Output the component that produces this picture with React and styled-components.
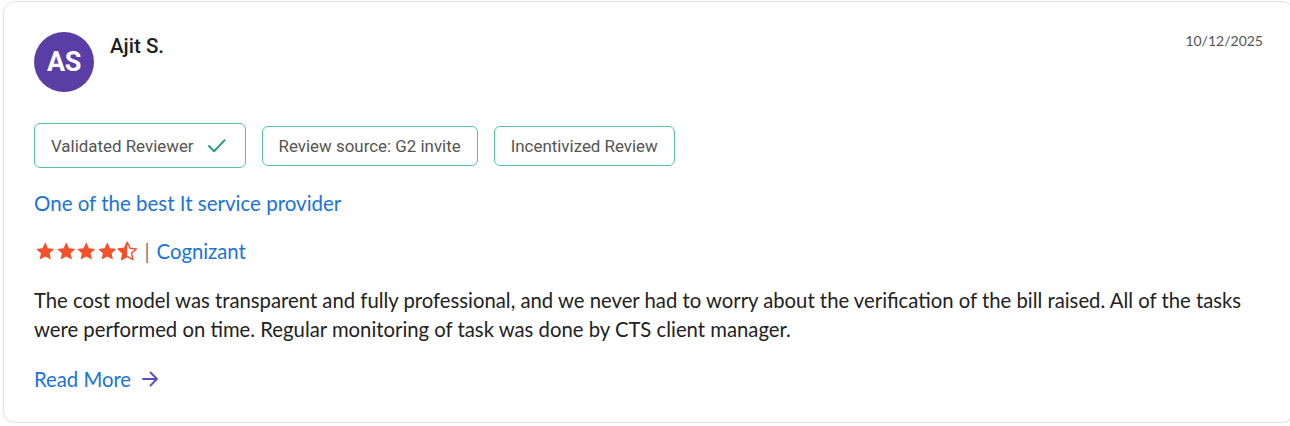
import React from "react";
import styled, { createGlobalStyle } from "styled-components";

const Global = createGlobalStyle`
  html, body { margin: 0; padding: 0; background: #ffffff; }
  body { font-family: "Lato", "Open Sans", sans-serif; overflow: hidden; }
`;

const Card = styled.div`
  box-sizing: border-box;
  margin: 1px -4px 0 3px;
  height: 422px;
  border: 1px solid #e2e2e2;
  border-radius: 12px;
  box-shadow: 0 1px 3px rgba(0,0,0,0.06);
  padding: 30px 30px 0 30px;
  display: flex;
  flex-direction: column;
`;

const Header = styled.div`
  display: flex;
  align-items: flex-start;
  justify-content: space-between;
`;

const Who = styled.div`
  display: flex;
  gap: 16px;
`;

const Avatar = styled.div`
  width: 60px;
  height: 60px;
  border-radius: 50%;
  background: #5a3ea6;
  color: #fff;
  font-family: "Roboto", sans-serif;
  font-weight: 700;
  font-size: 27px;
  letter-spacing: -0.5px;
  display: flex;
  align-items: center;
  justify-content: center;
`;

const Name = styled.div`
  font-family: "Roboto", "Inter", sans-serif;
  font-weight: 500;
  font-size: 20.5px;
  line-height: 24px;
  color: #1f1f1f;
  margin-top: 2px;
`;

const DateText = styled.div`
  font-family: "Lato", sans-serif;
  font-size: 14px;
  color: #555;
  margin-top: 0px;
`;

const Badges = styled.div`
  display: flex;
  align-items: center;
  gap: 16px;
  margin-top: 31px;
`;

const Badge = styled.div`
  box-sizing: border-box;
  height: ${p => (p.$tall ? 45 : 40)}px;
  display: flex;
  align-items: center;
  gap: 13px;
  padding: 0 ${p => (p.$tall ? 19 : 16)}px 0 16px;
  border: 1px solid #55c3a3;
  border-radius: 6px;
  font-family: "Roboto", sans-serif;
  font-size: 16.9px;
  color: #555;
  white-space: nowrap;
`;

const Stack = styled.div`
  display: flex;
  flex-direction: column;
  gap: 22px;
  margin-top: 22px;
`;

const Title = styled.div`
  font-family: "Lato", sans-serif;
  font-size: 20.5px;
  line-height: 26px;
  color: #1a73d9;
`;

const RatingRow = styled.div`
  display: flex;
  align-items: center;
  font-family: "Lato", sans-serif;
  font-size: 20.3px;
  line-height: 26px;
`;

const Stars = styled.div`
  display: flex;
  margin-left: 1px;
`;

const Sep = styled.span`
  color: #777;
  margin: 0 7px 0 7px;
`;

const Company = styled.span`
  color: #1a73d9;
`;

const Body = styled.p`
  margin: 0;
  font-family: "Lato", sans-serif;
  font-size: 20.3px;
  line-height: 29px;
  color: #222;
`;

const ReadMore = styled.div`
  display: flex;
  align-items: center;
  gap: 10px;
  font-family: "Lato", sans-serif;
  font-size: 20.3px;
  line-height: 26px;
  color: #1a73d9;
`;

const STAR = "M10 1.3l2.65 5.7 6.2.7-4.6 4.25 1.25 6.2L10 15.05l-5.5 3.1 1.25-6.2L1.15 7.7l6.2-.7z";

const Star = ({ half }) => (
  <svg width="20.5" height="20.5" viewBox="0 0 20 20">
    {half ? (
      <>
        <defs>
          <clipPath id="lh">
            <rect x="0" y="0" width="10" height="20" />
          </clipPath>
        </defs>
        <path d={STAR} fill="none" stroke="#f4502b" strokeWidth="1.4" strokeLinejoin="round" />
        <path d={STAR} fill="#f4502b" clipPath="url(#lh)" />
      </>
    ) : (
      <path d={STAR} fill="#f4502b" />
    )}
  </svg>
);

const Check = () => (
  <svg width="19" height="19" viewBox="0 0 20 20">
    <path d="M2 10.5l5.5 5.5L18.5 4.5" fill="none" stroke="#2e9e80" strokeWidth="2.1" strokeLinecap="round" strokeLinejoin="round" />
  </svg>
);

const Arrow = () => (
  <svg width="18" height="18" viewBox="0 0 18 18">
    <path d="M2 9h13.5M9.5 2.5L16 9l-6.5 6.5" fill="none" stroke="#5a4cc4" strokeWidth="1.8" strokeLinecap="round" strokeLinejoin="round" />
  </svg>
);

export default function App() {
  return (
    <>
      <Global />
      <Card>
        <Header>
          <Who>
            <Avatar>AS</Avatar>
            <Name>Ajit S.</Name>
          </Who>
          <DateText>10/12/2025</DateText>
        </Header>
        <Badges>
          <Badge $tall>
            Validated Reviewer
            <Check />
          </Badge>
          <Badge>Review source: G2 invite</Badge>
          <Badge>Incentivized Review</Badge>
        </Badges>
        <Stack>
          <Title>One of the best It service provider</Title>
          <RatingRow>
            <Stars>
              <Star />
              <Star />
              <Star />
              <Star />
              <Star half />
            </Stars>
            <Sep>|</Sep>
            <Company>Cognizant</Company>
          </RatingRow>
          <Body>
            The cost model was transparent and fully professional, and we never had to worry about the verification of the bill raised. All of the tasks were performed on time. Regular monitoring of task was done by CTS client manager.
          </Body>
          <ReadMore>
            Read More
            <Arrow />
          </ReadMore>
        </Stack>
      </Card>
    </>
  );
}
